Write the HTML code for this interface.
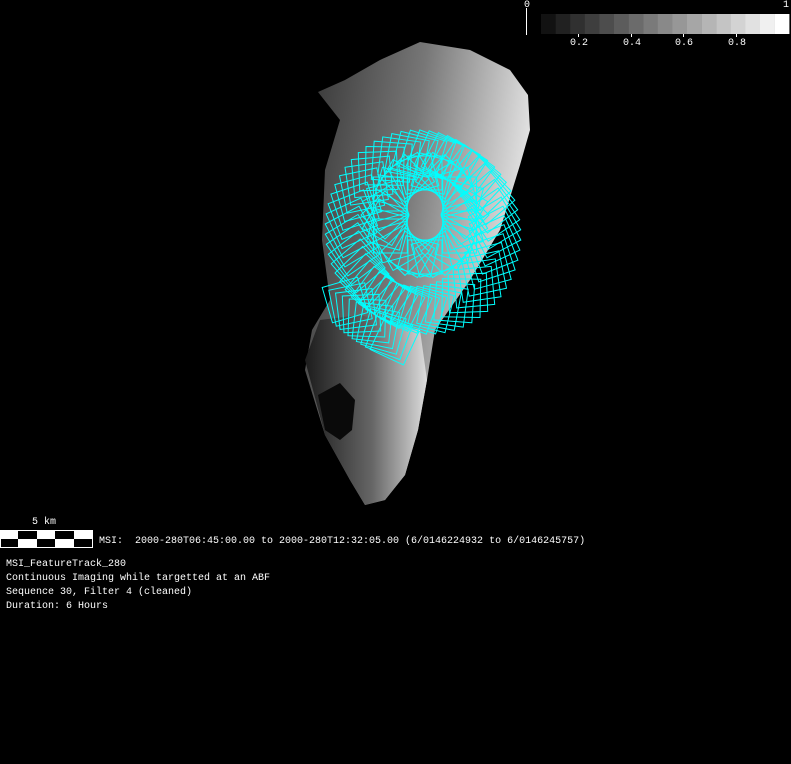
<!DOCTYPE html>
<html><head><meta charset="utf-8"><style>
html,body{margin:0;padding:0;background:#000;width:791px;height:764px;overflow:hidden}
.t{position:absolute;font-family:"Liberation Mono",monospace;font-size:10px;color:#fff;white-space:pre;line-height:14px}
</style></head><body>
<svg width="791" height="764" style="position:absolute;left:0;top:0">
<defs>
<linearGradient id="g1" x1="0" y1="0" x2="1" y2="0.3">
<stop offset="0" stop-color="#333"/><stop offset="0.5" stop-color="#777"/><stop offset="1" stop-color="#e8e8e8"/></linearGradient>
<linearGradient id="g2" x1="0" y1="0" x2="1" y2="0">
<stop offset="0" stop-color="#1c1c1c"/><stop offset="0.55" stop-color="#666"/><stop offset="1" stop-color="#ddd"/></linearGradient>
</defs>
<path d="M318 92 L345 80 L380 60 L420 42 L470 50 L510 70 L528 95 L530 130 L520 165 L500 230 L470 280 L435 330 L427 380 L418 430 L405 475 L385 500 L365 505 L350 480 L325 435 L305 370 L312 330 L330 300 L322 240 L325 170 L340 120 Z" fill="url(#g1)"/>
<path d="M305 360 L320 320 L360 315 L420 330 L427 380 L418 430 L405 475 L385 500 L365 505 L350 480 L325 435 Z" fill="url(#g2)"/>
<path d="M318 395 L340 383 L355 400 L352 430 L340 440 L325 430 Z" fill="#0a0a0a"/>
<g id="cy" stroke="#00ffff" stroke-width="1" fill="none"></g>
<rect x="0.5" y="530.5" width="92" height="17" fill="#fff" stroke="#fff"/>
<g fill="#000">
<rect x="18" y="531" width="19" height="8"/><rect x="55" y="531" width="19" height="8"/>
<rect x="1" y="539" width="17" height="8"/><rect x="37" y="539" width="18" height="8"/><rect x="74" y="539" width="18" height="8"/>
</g>
<line x1="526.5" y1="8" x2="526.5" y2="35" stroke="#fff"/>
<g id="cb"></g>
<g stroke="#fff"><line x1="578.5" y1="34" x2="578.5" y2="37"/><line x1="631.5" y1="34" x2="631.5" y2="37"/><line x1="683.5" y1="34" x2="683.5" y2="37"/><line x1="736.5" y1="34" x2="736.5" y2="37"/></g>
</svg>
<div class="t" style="left:524px;top:-1px">0</div>
<div class="t" style="left:783px;top:-1px">1</div>
<div class="t" style="left:570px;top:37px">0.2</div>
<div class="t" style="left:623px;top:37px">0.4</div>
<div class="t" style="left:675px;top:37px">0.6</div>
<div class="t" style="left:728px;top:37px">0.8</div>
<div class="t" style="left:32px;top:516px">5 km</div>
<div class="t" style="left:99px;top:535px">MSI:  2000-280T06:45:00.00 to 2000-280T12:32:05.00 (6/0146224932 to 6/0146245757)</div>
<div class="t" style="left:6px;top:558px">MSI_FeatureTrack_280
Continuous Imaging while targetted at an ABF
Sequence 30, Filter 4 (cleaned)
Duration: 6 Hours</div>
<script>
var ns="http://www.w3.org/2000/svg";
var cb=document.getElementById("cb");
for(var i=0;i<17;i++){var r=document.createElementNS(ns,"rect");r.setAttribute("x",541+i*14.6);r.setAttribute("y",14);r.setAttribute("width",14.8);r.setAttribute("height",20);var v=Math.round(18+i*(237/16));r.setAttribute("fill","rgb("+v+","+v+","+v+")");cb.appendChild(r);}
var g=document.getElementById("cy");
function sq(cx,cy,s,a){var p=[];for(var k=0;k<4;k++){var b=a+k*Math.PI/2;p.push((cx+s*Math.cos(b)).toFixed(1)+","+(cy+s*Math.sin(b)).toFixed(1));}var e=document.createElementNS(ns,"polygon");e.setAttribute("points",p.join(" "));g.appendChild(e);}
for(var i=0;i<56;i++){var t=i/56*Math.PI*2;var cx=423+72*Math.cos(t),cy=232+78*Math.sin(t);sq(cx,cy,27,t*0.5+0.3);}
for(var i=0;i<36;i++){var t=i/36*Math.PI*2;var cx=425+40*Math.cos(t),cy=215+42*Math.sin(t);sq(cx,cy,24,t*1.5);}
for(var i=0;i<10;i++){var f=i/10;var cx=345+f*55,cy=300+f*45;sq(cx,cy,26,0.5+f*0.8);}
</script>
</body></html>
